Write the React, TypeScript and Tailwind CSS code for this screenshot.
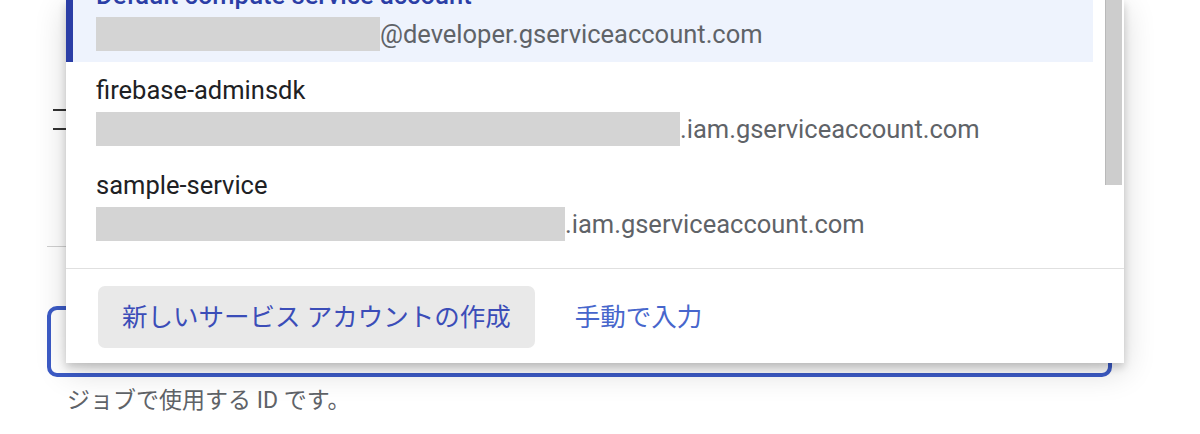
import React from "react";

interface Account {
  name: string;
  redactWidth: number;
  suffix: string;
  selected?: boolean;
}

const accounts: Account[] = [
  {
    name: "Default compute service account",
    redactWidth: 284,
    suffix: "@developer.gserviceaccount.com",
    selected: true,
  },
  { name: "firebase-adminsdk", redactWidth: 584, suffix: ".iam.gserviceaccount.com" },
  { name: "sample-service", redactWidth: 469, suffix: ".iam.gserviceaccount.com" },
];

const AccountRow: React.FC<{ account: Account; first: boolean }> = ({ account, first }) => {
  return (
    <div
      className={`flex h-[95px] ${first ? "-mt-[33px]" : ""} ${
        account.selected ? "bg-[#eef3fd]" : "bg-white"
      }`}
    >
      <div className={`w-[7px] shrink-0 ${account.selected ? "bg-[#2b3ea6]" : ""}`}></div>
      <div className="flex flex-col pl-[23px] pt-[12px]">
        <div
          className={`h-[32px] leading-[32px] text-[25.5px] ${
            account.selected ? "text-[#2b3ea6] font-medium" : "text-[#202124]"
          }`}
        >
          {account.name}
        </div>
        <div className="mt-[6px] flex items-center h-[34px]">
          <div className="h-[34px] bg-[#d4d4d4]" style={{ width: account.redactWidth }}></div>
          <span className="text-[25.5px] leading-[34px] text-[#5f6368]">{account.suffix}</span>
        </div>
      </div>
    </div>
  );
};

const App: React.FC = () => {
  return (
    <div className="relative w-[1200px] h-[434px] overflow-hidden bg-white font-['Roboto','Noto_Sans_CJK_JP',sans-serif]">
      {/* page underneath the dropdown */}
      <div className="pl-[47px] flex flex-col">
        <div className="mt-[109px] ml-[6px] flex flex-col gap-[17px] w-[20px]">
          <div className="h-[2px] bg-[#333]"></div>
          <div className="h-[2px] bg-[#333]"></div>
        </div>
        <div className="mt-[116px] h-px w-[1065px] bg-[#d0d0d0]"></div>
        <div className="mt-[59px] h-[71px] w-[1065px] rounded-[10px] border-4 border-[#3c5bc6]"></div>
        <div className="mt-[10px] ml-[20px] text-[23px] leading-[28px] text-[#5f6368]">
          ジョブで使用する ID です。
        </div>
      </div>

      {/* dropdown menu */}
      <div className="absolute left-[66px] top-0 w-[1058px] bg-white shadow-[0_4px_8px_rgba(0,0,0,0.18),0_8px_30px_rgba(0,0,0,0.16)]">
        <div className="flex h-[268px] overflow-hidden">
          <div className="flex-1 mr-[12px] flex flex-col">
            {accounts.map((a, i) => (
              <AccountRow key={a.name} account={a} first={i === 0} />
            ))}
          </div>
          <div className="w-[19px] shrink-0">
            <div className="w-[17px] h-[185px] bg-[#cdcdcd] border-l border-[#b9b9b9]"></div>
          </div>
        </div>
        <div className="border-t border-[#e0e0e0] flex items-center gap-[40px] px-[32px] pt-[17px] pb-[15px]">
          <button className="h-[62px] px-[24px] rounded-[7px] bg-[#e9e9e9] text-[25.5px] text-[#3b4db8]">
            新しいサービス アカウントの作成
          </button>
          <button className="text-[25.5px] text-[#4766cc]">手動で入力</button>
        </div>
      </div>
    </div>
  );
};

export default App;
